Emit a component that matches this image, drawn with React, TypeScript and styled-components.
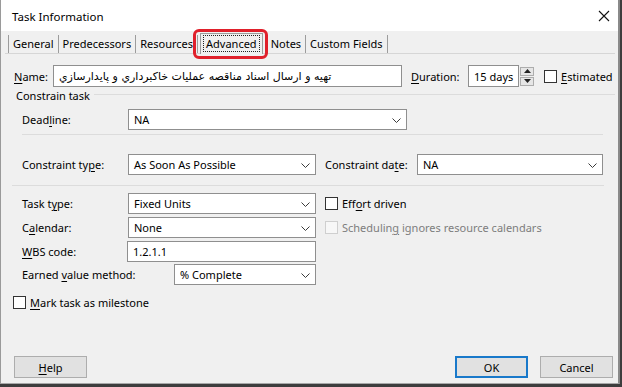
import React from "react";
import styled, { createGlobalStyle } from "styled-components";

const GlobalStyle = createGlobalStyle`
  html, body { margin: 0; padding: 0; }
  body {
    background: #3d3d3d;
    font-family: "Noto Sans", "DejaVu Sans", sans-serif;
    font-size: 11px;
    color: #000;
  }
  #root { width: 622px; height: 387px; overflow: hidden; }
`;

const Dialog = styled.div`
  width: 617px;
  height: 383px;
  background: #f0f0f0;
  border-left: 1px solid #9a9a9a;
  border-right: 2px solid #8a8a8a;
  border-bottom: 1px solid #a8a8a8;
  display: flex;
  flex-direction: column;
`;

const TitleBar = styled.div`
  height: 31px;
  box-sizing: border-box;
  padding: 2px 8px 0 11px;
  background: #ffffff;
  display: flex;
  align-items: center;
  justify-content: space-between;
  flex-shrink: 0;
`;

const TitleText = styled.span`
  font-size: 11.5px;
  color: #000;
`;

const CloseIcon = styled.svg`
  width: 12px;
  height: 12px;
  margin-top: -1px;
`;

const TabStrip = styled.div`
  display: flex;
  align-items: flex-end;
  height: 22px;
  padding-left: 7px;
  flex-shrink: 0;
`;

const Tab = styled.div<{ $active?: boolean; $first?: boolean }>`
  position: relative;
  height: ${(p) => (p.$active ? 21 : 18)}px;
  line-height: ${(p) => (p.$active ? 19 : 18)}px;
  padding: 0 ${(p) => (p.$active ? 3 : 4)}px;
  margin-right: ${(p) => (p.$active ? 3 : 0)}px;
  margin-left: ${(p) => (p.$active ? 2 : 0)}px;
  border-right: 1px solid #9c9c9c;
  border-left: ${(p) => (p.$first || p.$active ? "1px solid #9c9c9c" : "none")};
  border-top: ${(p) => (p.$active ? "1px solid #9c9c9c" : "none")};
  background: #f0f0f0;
  margin-bottom: ${(p) => (p.$active ? -1 : 0)}px;
  z-index: ${(p) => (p.$active ? 2 : 1)};
  white-space: nowrap;
  box-sizing: border-box;
`;

const FocusRing = styled.span`
  display: inline-block;
  line-height: 15px;
  padding: 0 2px;
  outline: 1px dotted #222;
  outline-offset: 0;
`;

const Highlight = styled.div`
  position: absolute;
  left: -8px;
  right: -6px;
  top: -5px;
  bottom: -5px;
  border: 3px solid #e0202b;
  border-radius: 6px;
  pointer-events: none;
`;

const Panel = styled.div`
  flex: 1;
  margin: 0 3px 0 4px;
  border-top: 1px solid #d6d6d6;
  display: flex;
  flex-direction: column;
`;

const Row = styled.div<{ $mt: number; $pl: number; $h?: number }>`
  display: flex;
  align-items: center;
  margin-top: ${(p) => p.$mt}px;
  padding-left: ${(p) => p.$pl}px;
  height: ${(p) => p.$h ?? 21}px;
  flex-shrink: 0;
`;

const Label = styled.span<{ $w?: number; $ml?: number; $disabled?: boolean }>`
  display: inline-block;
  width: ${(p) => (p.$w ? `${p.$w}px` : "auto")};
  margin-left: ${(p) => p.$ml ?? 0}px;
  color: ${(p) => (p.$disabled ? "#7d7d7d" : "#000")};
  white-space: nowrap;
  flex-shrink: 0;
`;

const Key = styled.span`
  text-decoration: underline;
  text-underline-offset: 2px;
`;

const TextBox = styled.div<{ $w: number; $h?: number }>`
  width: ${(p) => p.$w}px;
  height: ${(p) => p.$h ?? 21}px;
  box-sizing: border-box;
  border: 1px solid #8f8f8f;
  background: #fff;
  display: flex;
  align-items: center;
  padding-left: 5px;
  white-space: nowrap;
  overflow: hidden;
  flex-shrink: 0;
`;

const RtlText = styled.span`
  font-family: "DejaVu Sans", "Noto Sans", sans-serif;
  font-size: 11px;
  direction: rtl;
  unicode-bidi: isolate;
`;

const SelectBox = styled.div<{ $w: number }>`
  width: ${(p) => p.$w}px;
  height: 21px;
  box-sizing: border-box;
  border: 1px solid #8f8f8f;
  background: #fff;
  display: flex;
  align-items: center;
  justify-content: space-between;
  padding: 0 5px 0 5px;
  white-space: nowrap;
  flex-shrink: 0;
`;

const Chevron = styled.svg`
  width: 9px;
  height: 5px;
  margin-top: 2px;
`;

const Spinner = styled.div`
  display: flex;
  flex-direction: column;
  width: 14px;
  height: 19px;
  margin-left: 1px;
  gap: 1px;
`;

const SpinButton = styled.div`
  flex: 1;
  border: 1px solid #adadad;
  background: #e6e6e6;
  display: flex;
  align-items: center;
  justify-content: center;
`;

const CheckBox = styled.span<{ $disabled?: boolean; $ml?: number }>`
  display: inline-block;
  width: 13px;
  height: 13px;
  box-sizing: border-box;
  border: 1px solid ${(p) => (p.$disabled ? "#cfcfcf" : "#333")};
  background: ${(p) => (p.$disabled ? "#f7f7f7" : "#fff")};
  margin-left: ${(p) => p.$ml ?? 0}px;
  margin-right: 4px;
  flex-shrink: 0;
`;

const GroupHeader = styled.div`
  display: flex;
  align-items: center;
  height: 12px;
  margin-top: 2px;
  padding-left: 11px;
  width: 599px;
  flex-shrink: 0;
`;

const GroupLine = styled.div`
  flex: 1;
  height: 1px;
  background: #dcdcdc;
  margin-left: 4px;
  margin-top: -2px;
`;

const Separator = styled.div<{ $mt: number; $ml: number; $w: number }>`
  height: 1px;
  background: #dcdcdc;
  margin-top: ${(p) => p.$mt}px;
  margin-left: ${(p) => p.$ml}px;
  width: ${(p) => p.$w}px;
  flex-shrink: 0;
`;

const Footer = styled.div`
  margin-top: auto;
  margin-bottom: 5px;
  display: flex;
  align-items: center;
  padding-left: 9px;
  padding-right: 2px;
`;

const Button = styled.div<{ $primary?: boolean; $ml?: number }>`
  width: 73px;
  height: 22px;
  box-sizing: border-box;
  border: ${(p) => (p.$primary ? "2px solid #1979ca" : "1px solid #adadad")};
  background: #e1e1e1;
  display: flex;
  align-items: center;
  justify-content: center;
  margin-left: ${(p) => (p.$ml !== undefined ? `${p.$ml}px` : "0")};
`;

const Spacer = styled.div`
  flex: 1;
`;

const ChevronIcon = () => (
  <Chevron viewBox="0 0 9 5">
    <path d="M0.5 0.5 L4.5 4.5 L8.5 0.5" fill="none" stroke="#3a3a3a" strokeWidth="1" />
  </Chevron>
);

const Select = ({ w, value }: { w: number; value: string }) => (
  <SelectBox $w={w}>
    <span>{value}</span>
    <ChevronIcon />
  </SelectBox>
);

export default function App() {
  return (
    <>
      <GlobalStyle />
      <Dialog>
        <TitleBar>
          <TitleText>Task Information</TitleText>
          <CloseIcon viewBox="0 0 12 12">
            <path d="M1 1 L11 11 M11 1 L1 11" stroke="#111" strokeWidth="1.1" fill="none" />
          </CloseIcon>
        </TitleBar>

        <TabStrip>
          <Tab $first>General</Tab>
          <Tab>Predecessors</Tab>
          <Tab>Resources</Tab>
          <Tab $active>
            <FocusRing>Advanced</FocusRing>
            <Highlight />
          </Tab>
          <Tab $first>Notes</Tab>
          <Tab>Custom Fields</Tab>
        </TabStrip>

        <Panel>
          <Row $mt={11} $pl={9} $h={22}>
            <Label $w={39}>
              <Key>N</Key>ame:
            </Label>
            <TextBox $w={349} $h={22}>
              <RtlText>تهیه و ارسال اسناد مناقصه عملیات خاکبرداري و پایدارسازي</RtlText>
            </TextBox>
            <Label $w={57} $ml={9}>
              <Key>D</Key>uration:
            </Label>
            <TextBox $w={51} $h={22}>15 days</TextBox>
            <Spinner>
              <SpinButton>
                <svg width="7" height="4" viewBox="0 0 7 4">
                  <path d="M0 4 L3.5 0 L7 4 Z" fill="#222" />
                </svg>
              </SpinButton>
              <SpinButton>
                <svg width="7" height="4" viewBox="0 0 7 4">
                  <path d="M0 0 L3.5 4 L7 0 Z" fill="#222" />
                </svg>
              </SpinButton>
            </Spinner>
            <CheckBox $ml={10} />
            <Label>
              <Key>E</Key>stimated
            </Label>
          </Row>

          <GroupHeader>
            <Label>Constrain task</Label>
            <GroupLine />
          </GroupHeader>

          <Row $mt={8} $pl={17}>
            <Label $w={106}>
              Dead<Key>l</Key>ine:
            </Label>
            <Select w={279} value="NA" />
          </Row>

          <Separator $mt={4} $ml={17} $w={581} />

          <Row $mt={19} $pl={17}>
            <Label $w={106}>
              Constraint ty<Key>p</Key>e:
            </Label>
            <Select w={188} value="As Soon As Possible" />
            <Label $w={92} $ml={9}>
              Constraint da<Key>t</Key>e:
            </Label>
            <Select w={186} value="NA" />
          </Row>

          <Separator $mt={10} $ml={7} $w={592} />

          <Row $mt={7} $pl={17}>
            <Label $w={106}>
              Task t<Key>y</Key>pe:
            </Label>
            <Select w={188} value="Fixed Units" />
            <CheckBox $ml={9} />
            <Label>
              Eff<Key>o</Key>rt driven
            </Label>
          </Row>

          <Row $mt={3} $pl={17}>
            <Label $w={106}>
              C<Key>a</Key>lendar:
            </Label>
            <Select w={188} value="None" />
            <CheckBox $ml={9} $disabled />
            <Label $disabled>
              Schedulin<Key>g</Key> ignores resource calendars
            </Label>
          </Row>

          <Row $mt={3} $pl={17}>
            <Label $w={105}>
              <Key>W</Key>BS code:
            </Label>
            <TextBox $w={189}>1.2.1.1</TextBox>
          </Row>

          <Row $mt={2} $pl={17}>
            <Label $w={152}>
              Earned <Key>v</Key>alue method:
            </Label>
            <Select w={142} value="% Complete" />
          </Row>

          <Row $mt={9} $pl={8} $h={16}>
            <CheckBox />
            <Label>
              <Key>M</Key>ark task as milestone
            </Label>
          </Row>

          <Footer>
            <Button>
              <span>
                <Key>H</Key>elp
              </span>
            </Button>
            <Spacer />
            <Button $primary>OK</Button>
            <Button $ml={12}>Cancel</Button>
          </Footer>
        </Panel>
      </Dialog>
    </>
  );
}
